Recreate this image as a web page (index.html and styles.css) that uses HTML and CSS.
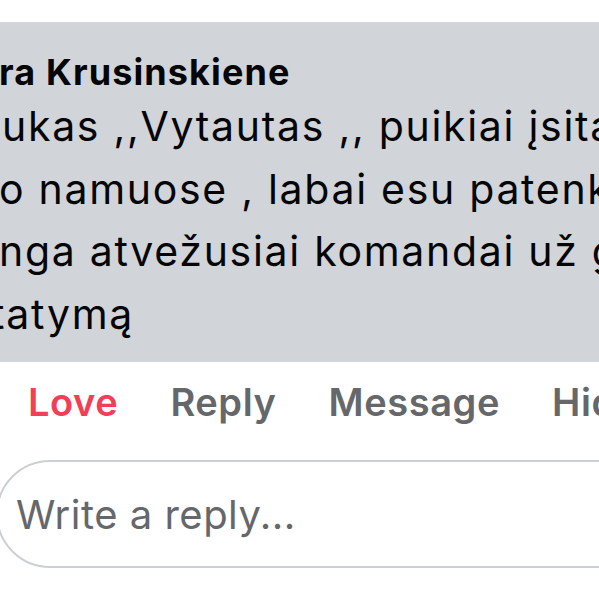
FILE: index.html
```html
<!DOCTYPE html>
<html lang="lt">
<head>
<meta charset="utf-8">
<title>Comment</title>
<link rel="stylesheet" href="styles.css">
</head>
<body>
<div class="page">
  <div class="bubble">
    <div class="name">ra Krusinskiene</div>
    <div class="text">
      <div class="line l1">ukas ,,Vytautas ,, puikiai įsitaisė</div>
      <div class="line l2">o namuose , labai esu patenkinta</div>
      <div class="line l3">nga atvežusiai komandai už greitą</div>
      <div class="line l4">tatymą</div>
    </div>
  </div>
  <div class="actions">
    <span class="act love">Love</span>
    <span class="act">Reply</span>
    <span class="act">Message</span>
    <span class="act">Hide</span>
  </div>
  <div class="reply">
    <span class="placeholder">Write a reply...</span>
  </div>
</div>
</body>
</html>
```
FILE: styles.css
```css
html, body {
  margin: 0;
  padding: 0;
  background: #ffffff;
  overflow: hidden;
}
body {
  width: 599px;
  height: 599px;
  font-family: Inter, "Noto Sans", "Liberation Sans", sans-serif;
  color: #050505;
}
.page {
  padding-top: 22px;
  width: 599px;
}
.bubble {
  background: #d1d4d9;
  height: 340px;
  box-sizing: border-box;
  padding-top: 30px;
  white-space: nowrap;
  overflow: hidden;
}
.name {
  font-size: 36px;
  font-weight: 700;
  letter-spacing: 1.1px;
  line-height: 40px;
  margin-left: -1px;
}
.text {
  font-size: 41px;
  letter-spacing: 1.7px;
  line-height: 62.5px;
  margin-top: 3px;
}
.line { white-space: nowrap; }
.l1 { margin-left: 2px; }
.l2 { margin-left: -1px; }
.l3 { margin-left: -1px; }
.l4 { margin-left: -9px; }
.actions {
  display: flex;
  gap: 52px;
  padding-left: 28px;
  height: 80px;
  align-items: center;
  font-size: 38px;
  font-weight: 600;
  letter-spacing: 0.6px;
  color: #65676b;
  white-space: nowrap;
}
.act.love { color: #f33e58; }
.reply {
  margin-left: -4px;
  margin-top: 18px;
  width: 700px;
  height: 108px;
  box-sizing: border-box;
  border: 2px solid #ccd0d5;
  border-radius: 54px;
  display: flex;
  align-items: center;
  padding-left: 18px;
}
.placeholder {
  font-size: 40px;
  letter-spacing: 0.5px;
  color: #65676b;
  white-space: nowrap;
}
```
